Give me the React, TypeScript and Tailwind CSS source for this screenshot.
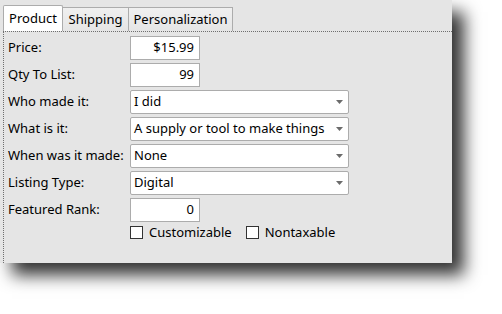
import React from "react";

const font = { fontFamily: '"Noto Sans", "Open Sans", sans-serif' };

const TextRow = ({ label, value }: { label: string; value: string }) => (
  <div className="flex items-center h-[24px]">
    <div className="w-[122px] text-[13px] text-black">{label}</div>
    <div className="w-[70px] h-[24px] bg-white border border-[#acacac] flex items-center justify-end pr-[5px] text-[13px] text-black">
      {value}
    </div>
  </div>
);

const SelectRow = ({ label, value }: { label: string; value: string }) => (
  <div className="flex items-center h-[24px]">
    <div className="w-[122px] text-[13px] text-black">{label}</div>
    <div className="w-[219px] h-[24px] bg-white border border-[#acacac] rounded-[2px] flex items-center pl-[3px] pr-[4px] text-[13px] text-black">
      <span className="flex-1">{value}</span>
      <svg width="8" height="5" viewBox="0 0 8 5">
        <path d="M0 0 H7 L3.5 4 Z" fill="#6b6b6b" />
      </svg>
    </div>
  </div>
);

const Check = ({ label }: { label: string }) => (
  <div className="flex items-center gap-[6px]">
    <div className="w-[13px] h-[13px] bg-white border border-[#333333]" />
    <span className="text-[13px] text-black leading-none">{label}</span>
  </div>
);

export default function App() {
  return (
    <div className="w-[502px] h-[314px] bg-white" style={font}>
      <div className="w-[452px] h-[263px] bg-[#e5e5e5] flex flex-col shadow-[12px_12px_16px_rgba(0,0,0,0.8)]">
        <div className="flex items-end pl-[3px] pt-[5px] h-[31px]">
          <div className="w-[60px] h-[26px] bg-white border border-b-0 border-[#acacac] rounded-t-[2px] flex items-center justify-center text-[13px] text-black">
            Product
          </div>
          <div className="w-[66px] h-[24px] bg-gradient-to-b from-[#f0f0f0] to-[#e5e5e5] border border-l-0 border-b-0 border-[#acacac] flex items-center justify-center text-[13px] text-black">
            Shipping
          </div>
          <div className="w-[104px] h-[24px] bg-gradient-to-b from-[#f0f0f0] to-[#e5e5e5] border border-l-0 border-b-0 border-[#acacac] flex items-center justify-center text-[13px] text-black">
            Personalization
          </div>
        </div>
        <div className="flex-1 border-t border-l border-dotted border-[#6e6e6e] ml-[3px] pt-[4px] pl-[4px] flex flex-col gap-[3px]">
          <TextRow label="Price:" value="$15.99" />
          <TextRow label="Qty To List:" value="99" />
          <SelectRow label="Who made it:" value="I did" />
          <SelectRow label="What is it:" value="A supply or tool to make things" />
          <SelectRow label="When was it made:" value="None" />
          <SelectRow label="Listing Type:" value="Digital" />
          <TextRow label="Featured Rank:" value="0" />
          <div className="flex gap-[14px] pl-[122px] pt-[1px]">
            <Check label="Customizable" />
            <Check label="Nontaxable" />
          </div>
        </div>
      </div>
    </div>
  );
}
